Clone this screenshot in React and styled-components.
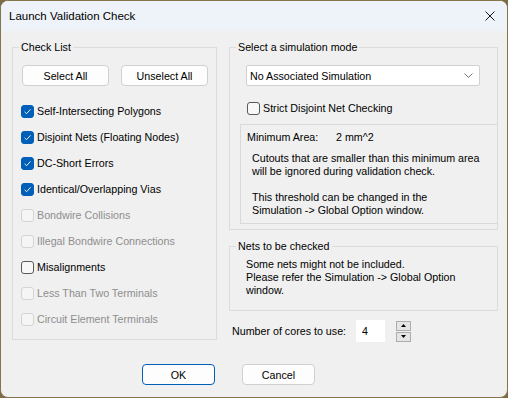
import React from "react";
import styled, { createGlobalStyle } from "styled-components";

const GlobalStyle = createGlobalStyle`
	html, body {
		margin: 0;
		padding: 0;
		background: #7b6c45;
	}
	body {
		font-family: "Liberation Sans", Arial, sans-serif;
		font-size: 10.7px;
		color: #000;
	}
`;

const Window = styled.div`
	width: 508px;
	height: 398px;
	box-sizing: border-box;
	border: 1px solid #85754a;
	border-radius: 8px;
	overflow: hidden;
	background: #f0f0f0;
	display: flex;
	flex-direction: column;
`;

const TitleBar = styled.div`
	height: 30px;
	flex: none;
	background: #eef3f9;
	display: flex;
	align-items: center;
	justify-content: space-between;
	padding-left: 8px;
`;

const Title = styled.span`
	font-size: 11.5px;
`;

const CloseButton = styled.div`
	width: 34px;
	height: 30px;
	display: flex;
	align-items: center;
	justify-content: center;
`;

const Content = styled.div`
	display: grid;
	grid-template-columns: 205px 269px;
	column-gap: 12px;
	padding: 10px 9px 0 11px;
`;

const Group = styled.fieldset`
	margin: 0;
	padding: 0;
	border: 1px solid #dcdcdc;
	box-sizing: border-box;
	height: ${(p) => p.$h}px;
	min-width: 0;
`;

const Legend = styled.legend`
	margin-left: ${(p) => p.$offset || 6}px;
	padding: 0 2px;
	line-height: 13px;
`;

const ButtonRow = styled.div`
	display: flex;
	gap: 12px;
	padding: 11px 0 0 9px;
	margin-bottom: 12px;
`;

const PushButton = styled.div`
	width: ${(p) => p.$w || 87}px;
	height: 21px;
	box-sizing: border-box;
	border: 1px solid ${(p) => (p.$focused ? "#005fb8" : "#d0d0d0")};
	border-radius: 4px;
	background: #fdfdfd;
	display: flex;
	align-items: center;
	justify-content: center;
`;

const CheckRow = styled.div`
	height: ${(p) => p.$h || 26}px;
	display: flex;
	align-items: center;
	gap: 3px;
	padding-left: ${(p) => p.$pad || 8}px;
	color: ${(p) => (p.$disabled ? "#8e8e8e" : "#000")};
	margin-top: ${(p) => p.$mt || 0}px;
`;

const Box = styled.span`
	width: 13px;
	height: 13px;
	box-sizing: border-box;
	border-radius: 3px;
	border: 1px solid
		${(p) => (p.$checked ? "#005fb8" : p.$disabled ? "#d4d4d4" : "#5a5a5a")};
	background: ${(p) =>
		p.$checked ? "#005fb8" : p.$disabled ? "#f5f5f5" : "#f8f8f8"};
	display: flex;
	align-items: center;
	justify-content: center;
	flex: none;
`;

const RightColumn = styled.div`
	display: flex;
	flex-direction: column;
`;

const Select = styled.div`
	margin: 11px 17px 0 16px;
	height: 21px;
	box-sizing: border-box;
	border: 1px solid #d0d0d0;
	border-radius: 2px;
	background: #fff;
	display: flex;
	align-items: center;
	justify-content: space-between;
	padding: 0 6px 0 3px;
`;

const InfoPanel = styled.div`
	margin: 6px 0 0 10px;
	height: 100px;
	box-sizing: border-box;
	border-top: 1px solid #d9d9d9;
	border-left: 1px solid #d9d9d9;
	border-bottom: 1px solid #d9d9d9;
	padding: 6px 0 0 6px;
	line-height: 13px;
`;

const AreaRow = styled.div`
	display: flex;
`;

const AreaLabel = styled.span`
	width: 89px;
`;

const Note = styled.p`
	margin: ${(p) => p.$mt || 0}px 0 0 5px;
	line-height: 13px;
`;

const NetsText = styled.p`
	margin: 5px 0 0 16px;
	line-height: 13px;
`;

const CoresRow = styled.div`
	display: flex;
	align-items: center;
	margin-top: 9px;
	padding-left: 3px;
	height: 22px;
`;

const CoresInput = styled.div`
	width: 29px;
	height: 22px;
	box-sizing: border-box;
	background: #fff;
	margin-left: 10px;
	padding-left: 6px;
	display: flex;
	align-items: center;
`;

const Spinner = styled.div`
	display: flex;
	flex-direction: column;
	gap: 1px;
	margin-left: 11px;
`;

const SpinButton = styled.div`
	width: 15px;
	height: 10px;
	box-sizing: border-box;
	border: 1px solid #adadad;
	background: #e5e5e5;
	display: flex;
	align-items: center;
	justify-content: center;
`;

const Footer = styled.div`
	display: flex;
	gap: 27px;
	padding: 22px 0 0 141px;
`;

const Check = () => (
	<svg width="9" height="9" viewBox="0 0 9 9">
		<path
			d="M1.6 4.8 L3.6 6.7 L7.5 2.3"
			fill="none"
			stroke="#fff"
			strokeWidth="0.9"
		/>
	</svg>
);

const CheckItem = ({ label, checked, disabled, ...rest }) => (
	<CheckRow $disabled={disabled} {...rest}>
		<Box $checked={checked} $disabled={disabled}>
			{checked && <Check />}
		</Box>
		<span>{label}</span>
	</CheckRow>
);

const checks = [
	{ label: "Self-Intersecting Polygons", checked: true },
	{ label: "Disjoint Nets (Floating Nodes)", checked: true },
	{ label: "DC-Short Errors", checked: true },
	{ label: "Identical/Overlapping Vias", checked: true },
	{ label: "Bondwire Collisions", disabled: true },
	{ label: "Illegal Bondwire Connections", disabled: true },
	{ label: "Misalignments" },
	{ label: "Less Than Two Terminals", disabled: true },
	{ label: "Circuit Element Terminals", disabled: true },
];

const Arrow = ({ up }) => (
	<svg width="5" height="3" viewBox="0 0 5 3">
		<path d={up ? "M0 3 L2.5 0 L5 3 Z" : "M0 0 L2.5 3 L5 0 Z"} fill="#000" />
	</svg>
);

export default function App() {
	return (
		<>
			<GlobalStyle />
			<Window>
				<TitleBar>
					<Title>Launch Validation Check</Title>
					<CloseButton>
						<svg width="10" height="10" viewBox="0 0 10 10">
							<path d="M0.5 0.5 L9.5 9.5 M9.5 0.5 L0.5 9.5" stroke="#1a1a1a" strokeWidth="1" />
						</svg>
					</CloseButton>
				</TitleBar>
				<Content>
					<Group $h={299}>
						<Legend>Check List</Legend>
						<ButtonRow>
							<PushButton>Select All</PushButton>
							<PushButton>Unselect All</PushButton>
						</ButtonRow>
						{checks.map((c) => (
							<CheckItem key={c.label} {...c} />
						))}
					</Group>
					<RightColumn>
						<Group $h={189}>
							<Legend>Select a simulation mode</Legend>
							<Select>
								<span>No Associated Simulation</span>
								<svg width="9" height="5" viewBox="0 0 9 5">
									<path d="M0.5 0.5 L4.5 4.5 L8.5 0.5" fill="none" stroke="#666" strokeWidth="0.9" />
								</svg>
							</Select>
							<CheckItem label="Strict Disjoint Net Checking" $h={20} $pad={17} $mt={12} />
							<InfoPanel>
								<AreaRow>
									<AreaLabel>Minimum Area:</AreaLabel>
									<span>2 mm^2</span>
								</AreaRow>
								<Note $mt={8}>
									Cutouts that are smaller than this minimum area
									<br />
									will be ignored during validation check.
								</Note>
								<Note $mt={13}>
									This threshold can be changed in the
									<br />
									Simulation -&gt; Global Option window.
								</Note>
							</InfoPanel>
						</Group>
						<Group $h={71} style={{ marginTop: 10 }}>
							<Legend>Nets to be checked</Legend>
							<NetsText>
								Some nets might not be included.
								<br />
								Please refer the Simulation -&gt; Global Option
								<br />
								window.
							</NetsText>
						</Group>
						<CoresRow>
							<span>Number of cores to use:</span>
							<CoresInput>4</CoresInput>
							<Spinner>
								<SpinButton>
									<Arrow up />
								</SpinButton>
								<SpinButton>
									<Arrow />
								</SpinButton>
							</Spinner>
						</CoresRow>
					</RightColumn>
				</Content>
				<Footer>
					<PushButton $w={73} $focused>
						OK
					</PushButton>
					<PushButton $w={73}>Cancel</PushButton>
				</Footer>
			</Window>
		</>
	);
}
